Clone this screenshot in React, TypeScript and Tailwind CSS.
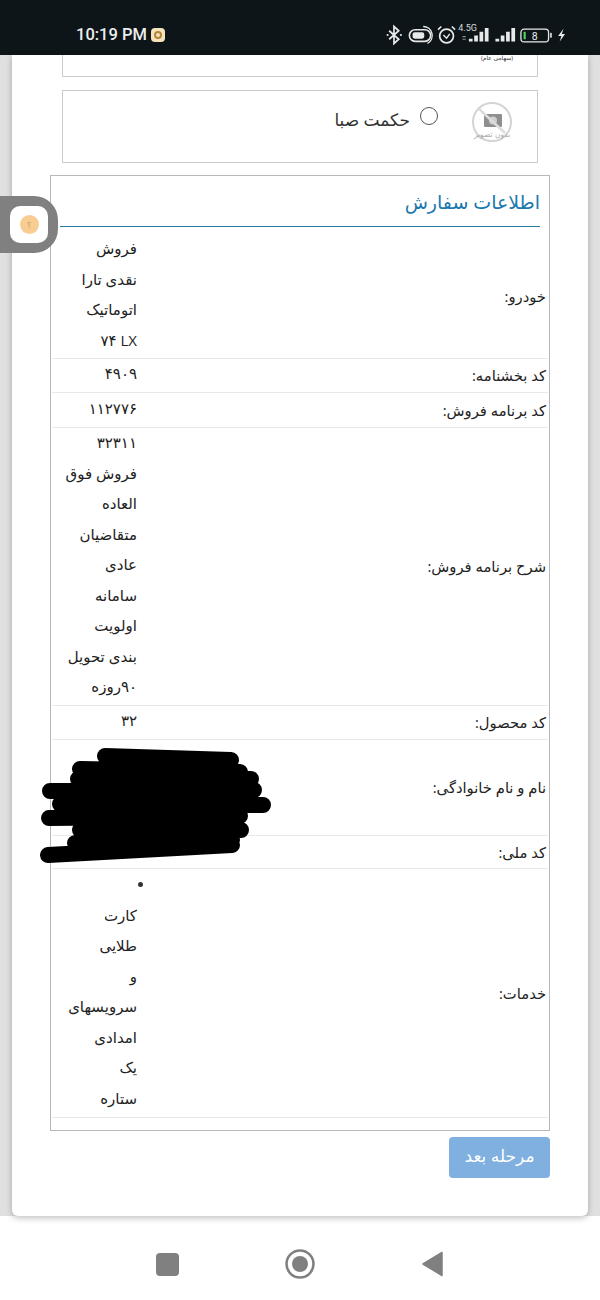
import React from "react";

const rows = [
  { label: "خودرو:", lines: ["فروش", "نقدی تارا", "اتوماتیک", "\u200E۷۴ LX"], h: "h-[125px]" },
  { label: "کد بخشنامه:", lines: ["۴۹۰۹"], h: "h-[34px]" },
  { label: "کد برنامه فروش:", lines: ["۱۱۲۷۷۶"], h: "h-[35px]" },
  {
    label: "شرح برنامه فروش:",
    lines: ["۳۲۳۱۱", "فروش فوق", "العاده", "متقاضیان", "عادی", "سامانه", "اولویت", "بندی تحویل", "۹۰روزه"],
    h: "h-[278px]",
  },
  { label: "کد محصول:", lines: ["۳۲"], h: "h-[34px]" },
  { label: "نام و نام خانوادگی:", lines: [], h: "h-[96px]" },
  { label: "کد ملی:", lines: [], h: "h-[33px]" },
  {
    label: "خدمات:",
    lines: ["•", "کارت", "طلایی", "و", "سرویسهای", "امدادی", "یک", "ستاره"],
    h: "h-[249px]",
  },
];

function StatusIcons() {
  return (
    <svg width="187" height="26" viewBox="0 0 176 24" fill="none">
      {/* bluetooth */}
      <path d="M3 8l9 8-4.5 4V4L12 8l-9 8" stroke="#e8eaea" strokeWidth="1.6" />
      <circle cx="1.5" cy="12" r="1" fill="#e8eaea" />
      <circle cx="14" cy="12" r="1" fill="#e8eaea" />
      {/* dnd toggle */}
      <rect x="22" y="7" width="20" height="11" rx="5.5" stroke="#e8eaea" strokeWidth="1.5" />
      <rect x="25" y="9.5" width="11" height="6" rx="2" fill="#e8eaea" />
      <path d="M35 4a8.500 8.500 0 0 1 4 16" stroke="#e8eaea" strokeWidth="1.3" />
      {/* alarm */}
      <circle cx="57" cy="13" r="6.500" stroke="#e8eaea" strokeWidth="1.600" />
      <path d="M54 12l3 3 3-4" stroke="#e8eaea" strokeWidth="1.300" />
      <path d="M49 7l3-3M65 7l-3-3" stroke="#e8eaea" strokeWidth="1.500" />
      {/* 4.5G signal */}
      <text x="68" y="8" fill="#d8dcdc" fontSize="8.500" fontFamily="Roboto, sans-serif">4.5G</text>
      <path d="M72 13h3v1h-3zM72 15.500h3v1h-3z" fill="#8a9090" />
      <path d="M78 15.500h3.500V18H78zM83 12.500h3.500V18H83zM88 9h3.500v9H88zM93 5.500h3.500V18H93z" fill="#e8eaea" />
      {/* signal 2 */}
      <path d="M103 15.500h3.500V18H103zM108 12.500h3.500V18H108zM113 9h3.500v9H113zM118 5.500h3.500V18H118z" fill="#e8eaea" />
      {/* battery */}
      <rect x="127" y="6.500" width="26" height="12" rx="3" stroke="#e8eaea" strokeWidth="1.200" />
      <rect x="129.500" y="9" width="2" height="7" fill="#4cd964" />
      <text x="140" y="16.500" textAnchor="middle" fill="#e8eaea" fontSize="10" fontFamily="Roboto, sans-serif">8</text>
      <rect x="154.500" y="10" width="1.500" height="4.500" fill="#e8eaea" />
      {/* charging */}
      <path d="M167 6l-5 7h3l-1.500 5 5-7h-3z" fill="#e8eaea" />
    </svg>
  );
}

function NoImage() {
  return (
    <svg width="42" height="42" viewBox="0 0 42 42" fill="none">
      <circle cx="21" cy="21" r="19" stroke="#d4d4d4" strokeWidth="2" />
      <rect x="13" y="13" width="18" height="13" rx="1" fill="#8f8f8f" />
      <circle cx="22" cy="19.500" r="4" fill="#cfcfcf" />
      <path d="M8 8l26 24" stroke="#dcdcdc" strokeWidth="2.500" />
      <text x="21" y="36" textAnchor="middle" fill="#a8a8a8" fontSize="7.500" fontFamily="'DejaVu Sans', sans-serif">بدون تصویر</text>
    </svg>
  );
}

export default function App() {
  return (
    <div dir="rtl" className="flex h-[1300px] w-[600px] flex-col overflow-hidden bg-white font-['Open_Sans','Noto_Sans','DejaVu_Sans',sans-serif] text-[#222]">
      {/* status bar */}
      <div dir="ltr" className="flex h-[55px] shrink-0 items-center justify-between bg-[#0e1518] pl-[76px] pr-[27px] pt-[15px]">
        <div className="flex items-center gap-[4px]">
          <span className="font-['Roboto',sans-serif] text-[16.5px] font-medium text-[#eceeee]">10:19 PM</span>
          <span className="flex h-[14px] w-[14px] items-center justify-center rounded-[4px] bg-[#f5e3bc]">
            <span className="h-[8px] w-[8px] rounded-full border-2 border-[#b4863c]" />
          </span>
        </div>
        <StatusIcons />
      </div>

      <div className="relative flex-1 bg-[#e0e0e0] px-3">
        <div className="flex h-full flex-col rounded-b-[6px] bg-white px-[38px] shadow-[0_2px_6px_rgba(0,0,0,0.25)]">
          {/* order options */}
          <div className="mx-[12px] flex h-[22px] shrink-0 border-x border-b border-[#cccccc] pr-[24px]">
            <span className="text-[6px] leading-[7px] text-[#333]">(سهامی عام)</span>
          </div>
          <div className="mx-[12px] mt-[13px] flex h-[73px] shrink-0 border border-[#cccccc] pr-[24px] pt-[10px]">
            <NoImage />
            <span className="mr-[33px] mt-[6px] h-[18px] w-[18px] rounded-full border border-[#555]" />
            <span className="mr-[10px] mt-[6px] text-[17px] text-[#333]">حکمت صبا</span>
          </div>

          {/* order info */}
          <div className="mt-[12px] h-[956px] shrink-0 border border-[#b8b8b8] px-[1px]">
            <div className="mx-[8px] h-[51px] border-b border-[#2a7ba0] pt-[12px] text-[19px] text-[#1a78ae]">
              اطلاعات سفارش
            </div>
            <div className="mt-[7px]">
              {rows.map((row) => (
                <div key={row.label} className={`relative flex items-center border-b border-[#e8e8e8] ${row.h}`}>
                  <div className="w-[411px] shrink-0 pr-[2px] text-[14.750px] text-[#222]">{row.label}</div>
                  <div className="pb-[4px] text-[15px] text-[#222]">
                    {row.lines.map((line, i) =>
                      line === "•" ? (
                        <div key={i} className="flex h-[30.500px] items-center">
                          <span className="-mr-[6px] h-[5px] w-[5px] rounded-full bg-[#333]" />
                        </div>
                      ) : (
                        <div key={i} className="h-[30.500px] leading-[30px]">{line}</div>
                      )
                    )}
                  </div>
                </div>
              ))}
            </div>
          </div>

          <div className="mt-[6px] flex h-[41px] w-[101px] shrink-0 items-center justify-center rounded-[4px] bg-[#7fb0e0] pb-[3px] text-[17px] text-white">
            مرحله بعد
          </div>
        </div>

        {/* redaction scribble */}
        <svg className="absolute left-[36px] top-[688px]" width="238" height="124" viewBox="36 743 238 124" fill="none" stroke="#000" strokeWidth="16" strokeLinecap="round">
          <path d="M105 756L231 760M80 769L240 772M78 779L251 779M50 791L254 790M60 804L263 805M49 818L240 816M80 830L241 830M75 843L232 840M48 855L232 845" />
        </svg>

        {/* floating accessibility button */}
        <div className="absolute left-0 top-[141px] flex h-[57px] w-[58px] items-center justify-center rounded-r-[24px] bg-[#808080]">
          <div className="flex h-[37px] w-[38px] items-center justify-center rounded-[10px] bg-white">
            <span className="flex h-[19px] w-[19px] items-center justify-center rounded-full bg-[#f7cd94] text-[8px] text-[#c49a5c]">؟</span>
          </div>
        </div>
      </div>

      {/* android nav */}
      <div dir="ltr" className="flex h-[84px] shrink-0 items-start justify-center gap-[105px] bg-white pt-[32px]">
        <span className="mt-[5px] h-[23px] w-[23px] rounded-[4px] bg-[#808080]" />
        <svg width="32" height="32" viewBox="0 0 32 32" fill="none">
          <circle cx="16" cy="16" r="13.500" stroke="#808080" strokeWidth="2.500" />
          <circle cx="16" cy="16" r="8" fill="#808080" />
        </svg>
        <svg width="24" height="26" viewBox="0 0 24 26" className="mt-[3px]">
          <path d="M21 1.500V24.500L2 13Z" fill="#808080" stroke="#808080" strokeWidth="1.500" strokeLinejoin="round" />
        </svg>
      </div>
    </div>
  );
}
